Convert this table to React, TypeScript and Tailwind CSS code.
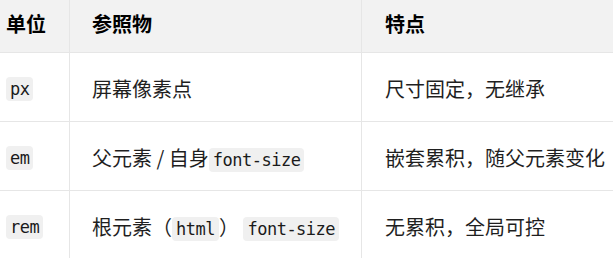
const sans = { fontFamily: '"Noto Sans CJK SC", "Noto Sans", sans-serif' }

function Code({ children }: { children: React.ReactNode }) {
  return (
    <code className="rounded-[4px] bg-[#f0f0f0] px-[4px] py-[2px] font-['DejaVu_Sans_Mono',monospace] text-[17px] leading-[20px] tracking-[-0.5px] text-[#1a1a1a]">
      {children}
    </code>
  )
}

const rows: { unit: string; ref: React.ReactNode; note: string }[] = [
  { unit: 'px', ref: '屏幕像素点', note: '尺寸固定，无继承' },
  {
    unit: 'em',
    ref: (
      <>
        父元素 / 自身<Code>font-size</Code>
      </>
    ),
    note: '嵌套累积，随父元素变化',
  },
  {
    unit: 'rem',
    ref: (
      <>
        根元素（<Code>html</Code>） <Code>font-size</Code>
      </>
    ),
    note: '无累积，全局可控',
  },
]

export default function App() {
  return (
    <div className="h-[258px] w-[613px] overflow-hidden bg-white text-[#1f1f1f]" style={sans}>
      <div className="grid grid-cols-[70px_292px_1fr]">
        {/* header */}
        <div className="flex h-[53px] items-center border-b border-r border-[#e6e6e6] bg-[#f2f2f2] pb-[4px] pl-[6px] text-[20px] font-bold text-black">
          单位
        </div>
        <div className="flex h-[53px] items-center border-b border-r border-[#e6e6e6] bg-[#f2f2f2] pb-[4px] pl-[22px] text-[20px] font-bold text-black">
          参照物
        </div>
        <div className="flex h-[53px] items-center border-b border-[#e6e6e6] bg-[#f2f2f2] pb-[4px] pl-[23px] text-[20px] font-bold text-black">
          特点
        </div>

        {rows.map((r) => (
          <div key={r.unit} className="contents">
            <div className="flex h-[69px] items-center border-b border-r border-[#e6e6e6] pl-[6px] pt-[3px]">
              <Code>{r.unit}</Code>
            </div>
            <div className="flex h-[69px] items-center whitespace-pre border-b border-r border-[#e6e6e6] pl-[22px] pt-[3px] text-[20px]">
              <span>{r.ref}</span>
            </div>
            <div className="flex h-[69px] items-center border-b border-[#e6e6e6] pl-[23px] pt-[3px] text-[20px]">
              {r.note}
            </div>
          </div>
        ))}
      </div>
    </div>
  )
}
